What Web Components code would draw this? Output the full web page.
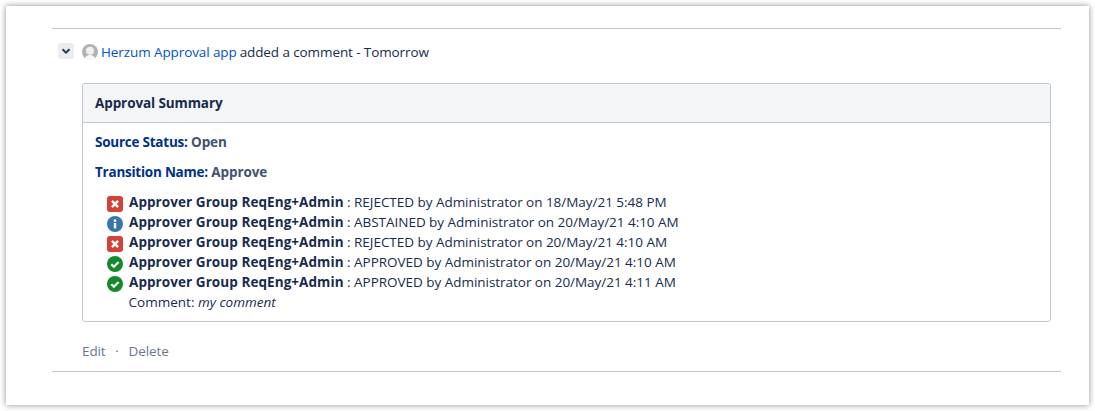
<!DOCTYPE html>
<html>
<head>
<meta charset="utf-8">
<title>Approval Summary</title>
<style>
  html, body { margin: 0; background: #fff; }
  body { font: 13.5px/20px "Open Sans", "Noto Sans", sans-serif; color: #172b4d; }
</style>
</head>
<body>
<page-card>
  <comment-item>
    <span slot="author">Herzum Approval app</span>
    <span slot="action">added a comment - Tomorrow</span>
    <approval-panel title-text="Approval Summary">
      <field-line label="Source Status:" value="Open"></field-line>
      <field-line label="Transition Name:" value="Approve"></field-line>
      <approval-list>
        <approval-row state="rejected" group="Approver Group ReqEng+Admin" text=": REJECTED by Administrator on 18/May/21 5:48 PM"></approval-row>
        <approval-row state="abstained" group="Approver Group ReqEng+Admin" text=": ABSTAINED by Administrator on 20/May/21 4:10 AM"></approval-row>
        <approval-row state="rejected" group="Approver Group ReqEng+Admin" text=": REJECTED by Administrator on 20/May/21 4:10 AM"></approval-row>
        <approval-row state="approved" group="Approver Group ReqEng+Admin" text=": APPROVED by Administrator on 20/May/21 4:10 AM"></approval-row>
        <approval-row state="approved" group="Approver Group ReqEng+Admin" text=": APPROVED by Administrator on 20/May/21 4:11 AM"></approval-row>
        <div class="note" style="padding-left:21.6px">Comment: <em>my comment</em></div>
      </approval-list>
    </approval-panel>
  </comment-item>
</page-card>

<script>
/**
 * Define a custom element whose shadow root is a fixed piece of markup.
 */
function defineStatic(name, html) {
  customElements.define(name, class extends HTMLElement {
    constructor() {
      super();
      this.attachShadow({ mode: 'open' }).innerHTML = html;
    }
  });
}

// Outer white sheet with the shadow
defineStatic('page-card', `
  <style>
    :host {
      display: block;
      box-sizing: border-box;
      width: 1083px;
      height: 399px;
      margin: 6px;
      padding: 22px 28px 0 46px;
      background: #fff;
      box-shadow: 0 0 6px rgba(0, 0, 0, 0.45);
    }
  </style>
  <slot></slot>
`);

// Comment with its toggle, byline, body and actions
defineStatic('comment-item', `
  <style>
    :host {
      display: block;
      border-top: 1px solid #c1c7d0;
      border-bottom: 1px solid #c1c7d0;
      height: 342px;
    }
    .byline {
      display: flex;
      align-items: center;
      height: 20px;
      margin-top: 13px;
      padding-left: 6px;
      letter-spacing: -0.1px;
    }
    .toggle {
      display: flex;
      align-items: center;
      justify-content: center;
      width: 16px;
      height: 16px;
      margin: 0 8px 2px 0;
      border-radius: 3px;
      background: #ebecf0;
    }
    .avatar { width: 16px; height: 16px; margin-right: 3px; }
    .author { color: #0052cc; margin-right: 3px; }
    .body { margin: 21px 10px 0 30px; }
    .actions {
      display: flex;
      margin: 19px 0 0 30px;
      color: #6b778c;
      letter-spacing: -0.1px;
    }
    .sep { width: 23px; text-align: center; }
  </style>
  <div class="byline">
    <span class="toggle">
      <svg width="10" height="10" viewBox="0 0 10 10"><path d="M1.500 3.200 5 6.600 8.500 3.200" fill="none" stroke="#253858" stroke-width="2"/></svg>
    </span>
    <svg class="avatar" viewBox="0 0 16 16">
      <circle cx="8" cy="8" r="8" fill="#b3b3b3"/>
      <circle cx="8" cy="6.800" r="4" fill="#f0f0f0"/>
      <path d="M2.400 15c1-2.800 3-4 5.600-4s4.600 1.200 5.600 4a8 8 0 0 1-11.200 0z" fill="#f7f7f7"/>
    </svg>
    <span class="author"><slot name="author"></slot></span>
    <slot name="action"></slot>
  </div>
  <div class="body"><slot></slot></div>
  <div class="actions"><span>Edit</span><span class="sep">·</span><span>Delete</span></div>
`);

/**
 * Bordered panel with a grey title bar.
 */
class ApprovalPanel extends HTMLElement {
  constructor() {
    super();
    this.attachShadow({ mode: 'open' }).innerHTML = `
      <style>
        :host {
          display: block;
          border: 1px solid #c1c7d0;
          border-radius: 3px;
          height: 237px;
        }
        .title {
          height: 38px;
          line-height: 38px;
          padding: 0 12px;
          font-weight: 700;
          letter-spacing: -0.1px;
          background: #f4f5f7;
          border-bottom: 1px solid #c1c7d0;
          border-radius: 3px 3px 0 0;
        }
        .content { padding: 9px 12px; }
      </style>
      <div class="title">${this.getAttribute('title-text')}</div>
      <div class="content"><slot></slot></div>
    `;
  }
}
customElements.define('approval-panel', ApprovalPanel);

/**
 * One "label: value" line of the panel.
 */
class FieldLine extends HTMLElement {
  constructor() {
    super();
    this.attachShadow({ mode: 'open' }).innerHTML = `
      <style>
        :host { display: block; margin-bottom: 10px; font-weight: 700; color: #42526e; letter-spacing: -0.1px; }
        .label { color: #003087; letter-spacing: -0.24px; }
      </style>
      <span class="label">${this.getAttribute('label')}</span> ${this.getAttribute('value')}
    `;
  }
}
customElements.define('field-line', FieldLine);

defineStatic('approval-list', `
  <style>:host { display: block; padding: 0 0 0 12px; }</style>
  <slot></slot>
`);

const STATE_ICONS = {
  rejected: `<rect width="16" height="16" rx="3" fill="#d04437"/><path d="M4.900 4.900l6.200 6.200M11.100 4.900l-6.200 6.200" stroke="#fff" stroke-width="2.400"/>`,
  abstained: `<circle cx="8" cy="8" r="8" fill="#3b73af"/><rect x="6.800" y="7" width="2.400" height="5.400" fill="#fff"/><circle cx="8" cy="4.700" r="1.400" fill="#fff"/>`,
  approved: `<circle cx="8" cy="8" r="8" fill="#14892c"/><path d="M4.300 8.200l2.600 2.500 4.700-4.700" fill="none" stroke="#fff" stroke-width="2.200"/>`
};

/**
 * A single approver decision with its status icon.
 */
class ApprovalRow extends HTMLElement {
  constructor() {
    super();
    this.attachShadow({ mode: 'open' }).innerHTML = `
      <style>
        :host { display: flex; align-items: center; height: 20px; white-space: pre; }
        svg { width: 16px; height: 16px; margin: 4px 6px 0 0; flex: none; }
        b { font-weight: 700; letter-spacing: 0.07px; }
        span { letter-spacing: -0.03px; }
      </style>
      <svg viewBox="0 0 16 16">${STATE_ICONS[this.getAttribute('state')]}</svg>
      <b>${this.getAttribute('group')}</b><span> ${this.getAttribute('text')}</span>
    `;
  }
}
customElements.define('approval-row', ApprovalRow);
</script>
</body>
</html>
